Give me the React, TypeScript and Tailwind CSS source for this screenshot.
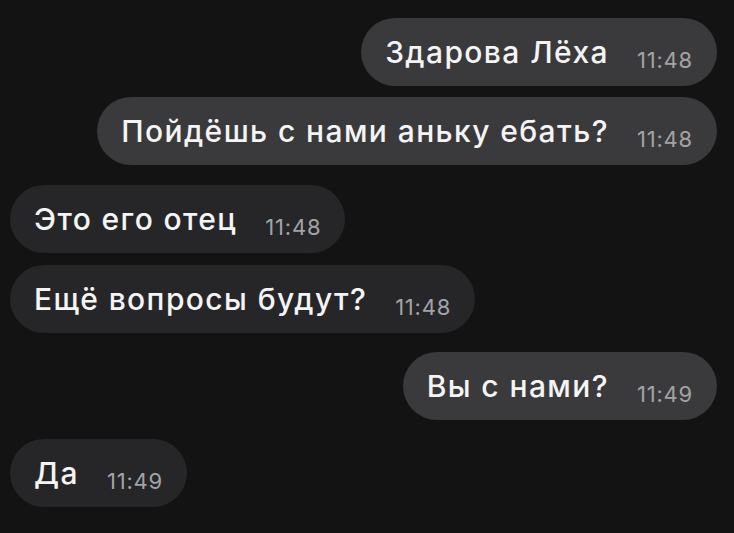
const messages = [
  { text: 'Здарова Лёха', time: '11:48', out: true, gap: 'mt-0' },
  { text: 'Пойдёшь с нами аньку ебать?', time: '11:48', out: true, gap: 'mt-[11px]' },
  { text: 'Это его отец', time: '11:48', out: false, gap: 'mt-[20px]' },
  { text: 'Ещё вопросы будут?', time: '11:48', out: false, gap: 'mt-[12px]' },
  { text: 'Вы с нами?', time: '11:49', out: true, gap: 'mt-[19px]' },
  { text: 'Да', time: '11:49', out: false, gap: 'mt-[19px]' },
];

function Bubble({ text, time, out }: { text: string; time: string; out: boolean }) {
  return (
    <div
      className={`flex h-[68px] items-center rounded-full px-[24px] ${
        out ? 'bg-[#3a3a3c]' : 'bg-[#262628]'
      }`}
    >
      <span className="text-[30px] leading-none font-medium tracking-[1.4px] text-[#f4f4f4]">
        {text}
      </span>
      <span className="ml-[28px] translate-y-[8px] text-[22px] leading-none tracking-[0.8px] text-[#a3a3a6]">
        {time}
      </span>
    </div>
  );
}

export default function App() {
  return (
    <div
      className="flex h-[533px] w-[734px] flex-col bg-[#131313] pt-[18px] pr-[17px] pl-[10px]"
      style={{ fontFamily: 'Inter, "Liberation Sans", sans-serif' }}
    >
      {messages.map((m, i) => (
        <div key={i} className={`flex ${m.out ? 'justify-end' : 'justify-start'} ${m.gap}`}>
          <Bubble text={m.text} time={m.time} out={m.out} />
        </div>
      ))}
    </div>
  );
}
